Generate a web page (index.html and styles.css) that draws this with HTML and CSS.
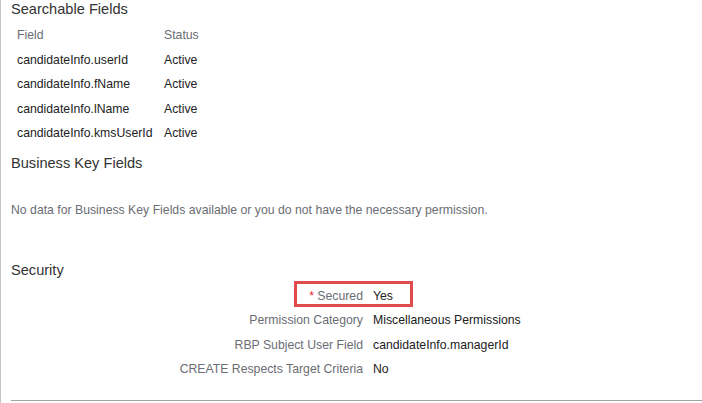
FILE: index.html
```html
<!DOCTYPE html>
<html lang="en">
<head>
    <meta charset="UTF-8">
    <meta name="viewport" content="width=device-width, initial-scale=1.0">
    <title>Object Definition</title>
    <link rel="stylesheet" href="styles.css">
</head>
<body>
    <div class="panel">
        <h2 class="section-title">Searchable Fields</h2>
        <table class="fields">
            <tr><th class="col-field">Field</th><th>Status</th></tr>
            <tr><td>candidateInfo.userId</td><td>Active</td></tr>
            <tr><td>candidateInfo.fName</td><td>Active</td></tr>
            <tr><td>candidateInfo.lName</td><td>Active</td></tr>
            <tr><td>candidateInfo.kmsUserId</td><td>Active</td></tr>
        </table>

        <h2 class="section-title title-bk">Business Key Fields</h2>
        <p class="no-data">No data for Business Key Fields available or you do not have the necessary permission.</p>

        <h2 class="section-title title-sec">Security</h2>
        <div class="props">
            <div class="prop-row highlighted">
                <span class="prop-label"><span class="req">*</span> Secured</span>
                <span class="prop-value">Yes</span>
                <span class="mark"></span>
            </div>
            <div class="prop-row">
                <span class="prop-label">Permission Category</span>
                <span class="prop-value">Miscellaneous Permissions</span>
            </div>
            <div class="prop-row">
                <span class="prop-label">RBP Subject User Field</span>
                <span class="prop-value">candidateInfo.managerId</span>
            </div>
            <div class="prop-row">
                <span class="prop-label">CREATE Respects Target Criteria</span>
                <span class="prop-value">No</span>
            </div>
        </div>
        <hr class="divider">
    </div>
</body>
</html>
```

FILE: styles.css
```css
body { margin: 0; background: #fff; font-family: "Liberation Sans", Arial, sans-serif; color: #333; }
.panel { border-left: 1px solid #c4c4c4; padding-left: 10px; height: 403px; box-sizing: border-box; }

.section-title { margin: 0; font-size: 14.6px; line-height: 18px; font-weight: normal; color: #333; }
.title-bk { margin-top: 8.5px; }
.title-sec { margin-top: 42.5px; }

.fields { border-collapse: collapse; margin: 5px 0 0 6px; font-size: 12.25px; }
.fields th, .fields td { padding: 0; height: 24.5px; text-align: left; vertical-align: middle; }
.fields th { font-weight: normal; color: #6a6d73; }
.fields td { color: #222; }
.col-field { width: 147px; }

.no-data { margin: 30px 0 0; font-size: 12.25px; line-height: 16px; color: #6a6d73; }

.props { margin-top: 5px; font-size: 12.25px; }
.prop-row { display: grid; grid-template-columns: 352px 1fr; column-gap: 10px; height: 24.5px; align-items: center; position: relative; }
.prop-label { text-align: right; color: #6a6d73; }
.prop-value { color: #222; }
.req { color: #e0262a; }

/* red annotation frame around the Secured row */
.mark { position: absolute; left: 283px; top: -3px; width: 113px; height: 20px; border: 3px solid #e24b4b; }

.divider { margin: 18px 0 0; border: 0; border-top: 1px solid #a4a4a4; }
```
